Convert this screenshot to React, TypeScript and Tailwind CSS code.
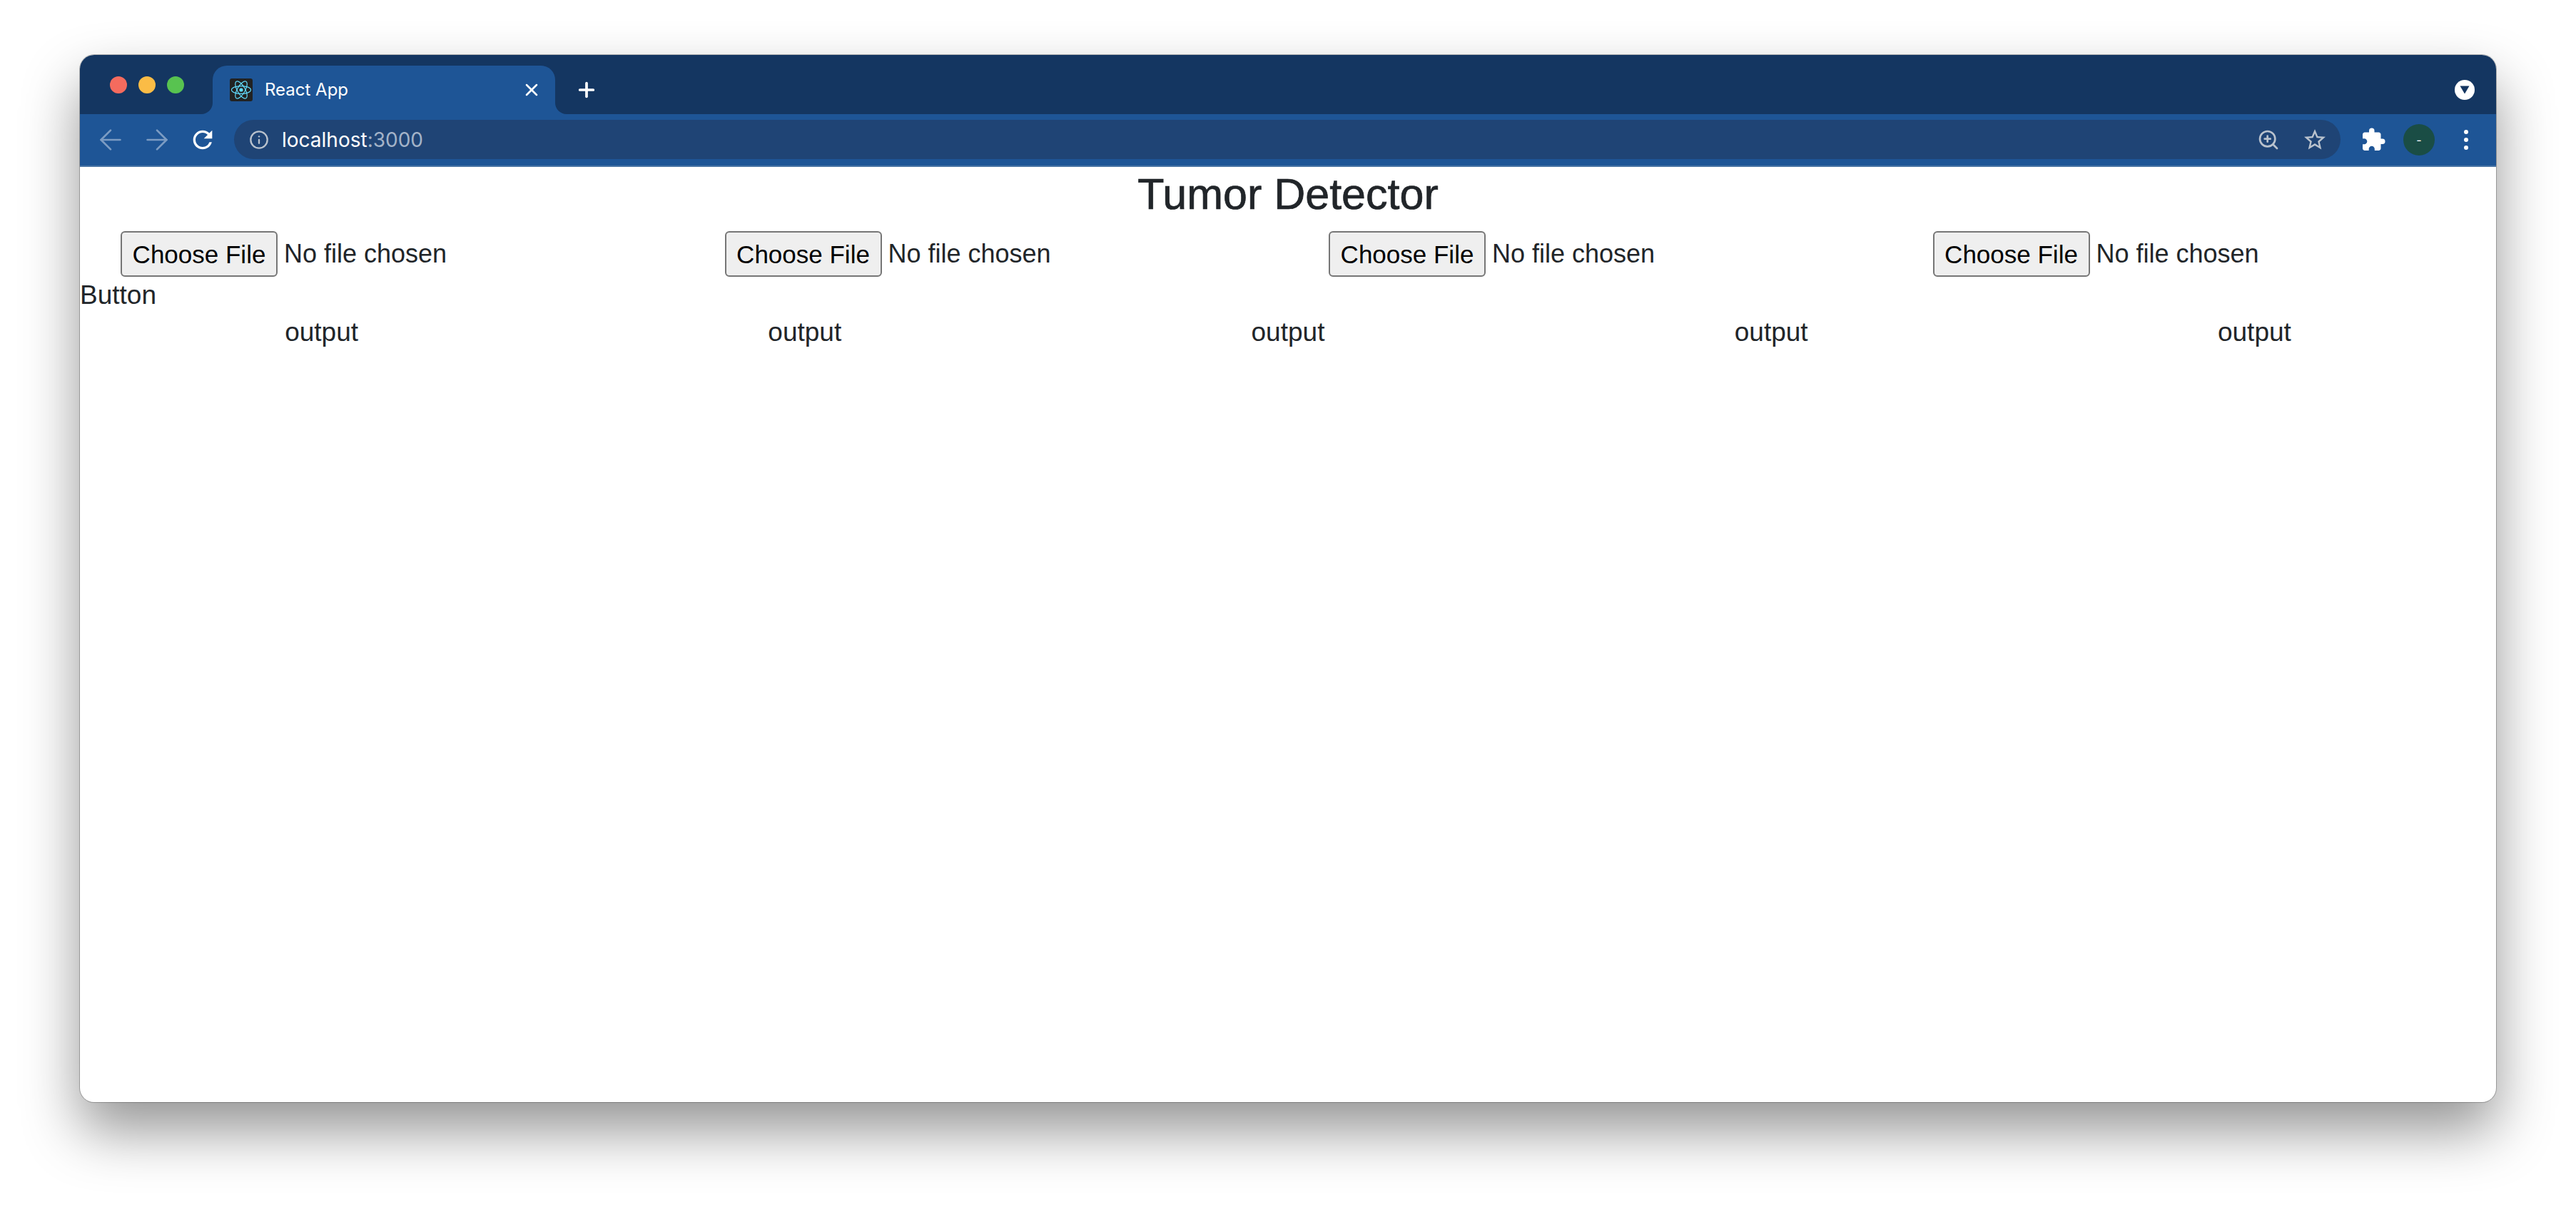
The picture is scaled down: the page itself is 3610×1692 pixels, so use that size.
import { ArrowLeft, ArrowRight, Info, Plus, X, ZoomIn } from 'lucide-react';
import { MdExtension, MdRefresh, MdStarBorder } from 'react-icons/md';

const bodyFont = "font-['Liberation_Sans',Arial,sans-serif]";
const chromeFont = "font-['Inter','Liberation_Sans',sans-serif]";

function ReactLogo() {
  return (
    <svg viewBox="0 0 32 32" className="w-8 h-8 rounded-[3px] bg-[#222222]" fill="none" stroke="#61dafb" strokeWidth="1.2">
      <circle cx="16" cy="16" r="2.6" fill="#61dafb" stroke="none" />
      <ellipse cx="16" cy="16" rx="13.5" ry="5.4" />
      <ellipse cx="16" cy="16" rx="13.5" ry="5.4" transform="rotate(60 16 16)" />
      <ellipse cx="16" cy="16" rx="13.5" ry="5.4" transform="rotate(120 16 16)" />
    </svg>
  );
}

function TitleBar() {
  return (
    <div className="flex items-end h-[83px] bg-[#143661] pl-[42px] pr-[30px]">
      <div className="flex gap-4 self-start mt-[30px]">
        <div className="w-6 h-6 rounded-full bg-[#f56b5e]" />
        <div className="w-6 h-6 rounded-full bg-[#fbbc46]" />
        <div className="w-6 h-6 rounded-full bg-[#58c350]" />
      </div>
      <div className="relative flex items-center ml-10 w-[480px] h-[68px] pl-6 pr-[19px] bg-[#1e5596] rounded-t-[20px]">
        <div className="absolute -left-4 bottom-0 w-4 h-4 bg-[#1e5596]">
          <div className="w-full h-full bg-[#143661] rounded-br-[16px]" />
        </div>
        <div className="absolute -right-4 bottom-0 w-4 h-4 bg-[#1e5596]">
          <div className="w-full h-full bg-[#143661] rounded-bl-[16px]" />
        </div>
        <ReactLogo />
        <span className={`ml-[17px] text-[24px] leading-none text-white ${chromeFont}`}>React App</span>
        <X className="ml-auto w-7 h-7 text-white" strokeWidth={2.2} />
      </div>
      <div className="h-[68px] flex items-center ml-7">
        <Plus className="w-8 h-8 text-white" strokeWidth={2.8} />
      </div>
      <div className="ml-auto h-[68px] flex items-center">
        <div className="w-7 h-7 rounded-full bg-white flex items-center justify-center">
          <svg viewBox="0 0 14 12" className="w-[14px] h-3">
            <path d="M0.5 0.5h13L7 11.5z" fill="#143661" />
          </svg>
        </div>
      </div>
    </div>
  );
}

function Toolbar() {
  return (
    <div className="flex items-center h-[74px] pb-[1px] pl-5 pr-[30px] bg-[#1e5596] border-b-2 border-[#4a75a5]">
      <ArrowLeft className="w-[46px] h-[46px] text-[#7c9cc3]" strokeWidth={1.4} />
      <ArrowRight className="ml-[19px] w-[46px] h-[46px] text-[#7c9cc3]" strokeWidth={1.4} />
      <MdRefresh className="ml-[21px] w-10 h-10 text-white" />
      <div className="flex items-center ml-6 w-[2952px] h-[55px] pl-[21px] pr-[18px] rounded-full bg-[#1f4475]">
        <Info className="w-7 h-7 text-[#b9c2cd]" strokeWidth={2} />
        <span className={`ml-[18px] text-[28px] leading-none pt-[1px] ${chromeFont}`}>
          <span className="text-white">localhost</span>
          <span className="text-[#a3b3c8]">:3000</span>
        </span>
        <ZoomIn className="ml-auto w-8 h-8 text-[#b9c2cd]" strokeWidth={2} />
        <MdStarBorder className="ml-[31px] w-9 h-9 text-[#b9c2cd]" />
      </div>
      <MdExtension className="ml-7 w-9 h-9 text-white" />
      <div className={`ml-6 w-11 h-11 rounded-full bg-[#1a4d45] flex items-center justify-center text-white text-[16px] ${chromeFont}`}>-</div>
      <div className="ml-auto flex flex-col gap-[5px] mr-[9px]">
        <div className="w-[6px] h-[6px] rounded-full bg-white" />
        <div className="w-[6px] h-[6px] rounded-full bg-white" />
        <div className="w-[6px] h-[6px] rounded-full bg-white" />
      </div>
    </div>
  );
}

function FileField() {
  return (
    <div className="flex items-center pl-[57px]">
      <button className="w-[220px] h-[64px] rounded-[6px] border-2 border-[#767676] bg-[#efefef] text-black text-[35px] leading-none">
        Choose File
      </button>
      <span className="ml-[9px] text-[36px] leading-none">No file chosen</span>
    </div>
  );
}

export default function App() {
  return (
    <div className={`w-[3610px] h-[1692px] bg-white pt-[77px] pl-[112px] overflow-hidden ${bodyFont}`}>
      <div className="w-[3386px] h-[1468px] rounded-[20px] overflow-hidden bg-white shadow-[0_0_0_1px_rgba(0,0,0,0.25),0_40px_80px_rgba(0,0,0,0.42)]">
        <TitleBar />
        <Toolbar />
        <div className="text-[#212529]">
          <h1 className="pt-[2px] h-[73px] mb-[17px] text-center text-[61px] leading-[73px] [-webkit-text-stroke:0.7px_#212529]">
            Tumor Detector
          </h1>
          <div className="grid grid-cols-4">
            <FileField />
            <FileField />
            <FileField />
            <FileField />
          </div>
          <div className="mt-1 text-[37px] leading-[44px]">Button</div>
          <div className="grid grid-cols-5 mt-[8px] text-center text-[37px] leading-[44px]">
            <div>output</div>
            <div>output</div>
            <div>output</div>
            <div>output</div>
            <div>output</div>
          </div>
        </div>
      </div>
    </div>
  );
}
